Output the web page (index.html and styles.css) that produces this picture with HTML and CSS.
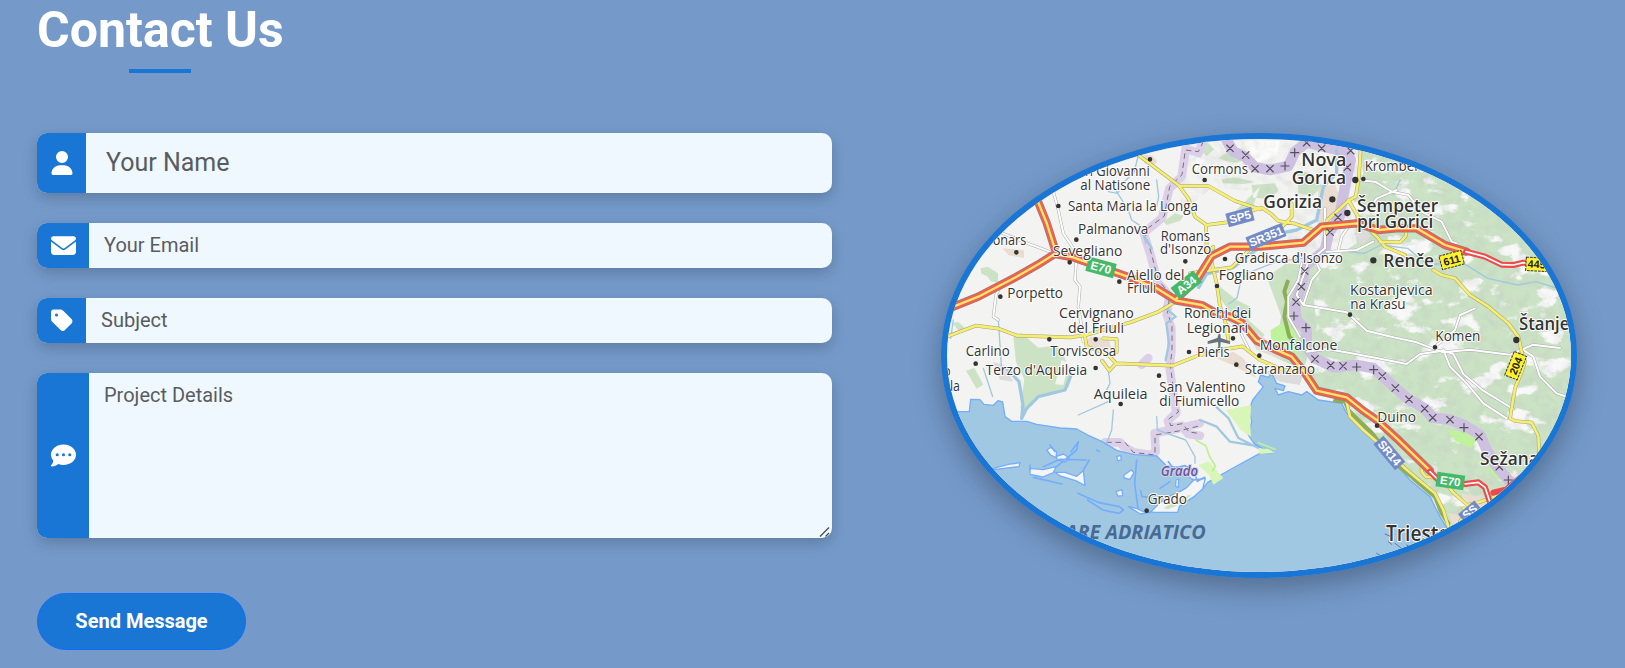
FILE: index.html
```html
<!DOCTYPE html>
<html lang="en">
<head>
<meta charset="utf-8">
<title>Contact Us</title>
<link rel="stylesheet" href="styles.css">
</head>
<body>
<section class="contact">
  <h2 class="title">Contact Us</h2>
  <div class="columns">
    <form class="form">
      <div class="field field-name">
        <span class="icon"><svg width="22" height="24" viewBox="0 0 448 512"><path d="M224 256a128 128 0 1 0 0-256 128 128 0 1 0 0 256zm-45.700 48C79.800 304 0 383.800 0 482.300 0 498.700 13.300 512 29.700 512h388.600c16.400 0 29.700-13.300 29.700-29.700C448 383.800 368.200 304 269.700 304h-91.400z"/></svg></span>
        <input class="input" type="text" placeholder="Your Name">
      </div>
      <div class="field">
        <span class="icon"><svg width="25" height="25" viewBox="0 0 512 512"><path d="M48 64C21.500 64 0 85.500 0 112c0 15.100 7.100 29.300 19.200 38.400l217.600 163.200c11.400 8.500 27 8.500 38.400 0l217.600-163.200c12.100-9.100 19.200-23.300 19.200-38.400 0-26.500-21.500-48-48-48H48zM0 176v208c0 35.300 28.700 64 64 64h384c35.300 0 64-28.700 64-64V176L294.400 339.200a64 64 0 0 1-76.800 0L0 176z"/></svg></span>
        <input class="input" type="email" placeholder="Your Email">
      </div>
      <div class="field">
        <span class="icon"><svg width="22" height="25" viewBox="0 0 448 512"><path d="M0 80v149.500c0 17 6.700 33.300 18.700 45.300l176 176c25 25 65.500 25 90.500 0l133.500-133.500c25-25 25-65.500 0-90.500l-176-176c-12-12-28.300-18.700-45.300-18.700H48C21.500 32 0 53.500 0 80zm112 32a32 32 0 1 1 0 64 32 32 0 1 1 0-64z"/></svg></span>
        <input class="input" type="text" placeholder="Subject">
      </div>
      <div class="field field-message">
        <span class="icon"><svg width="25" height="25" viewBox="0 0 512 512"><path d="M256 448c141.400 0 256-93.100 256-208S397.400 32 256 32 0 125.100 0 240c0 45.100 17.700 86.800 47.700 120.900-1.900 24.500-11.400 46.300-21.400 62.900-5.500 9.200-11.100 16.600-15.200 21.600-2.100 2.500-3.700 4.400-4.900 5.700-.6.600-1 1.100-1.300 1.400l-.3.300c-4.600 4.600-5.900 11.400-3.400 17.400s8.300 9.900 14.800 9.900c28.700 0 57.600-8.900 81.600-19.300 22.900-10 42.400-21.900 54.300-30.600 31.800 11.500 67 17.900 104.100 17.900zM128 208a32 32 0 1 1 0 64 32 32 0 1 1 0-64zm128 0a32 32 0 1 1 0 64 32 32 0 1 1 0-64zm96 32a32 32 0 1 1 64 0 32 32 0 1 1-64 0z"/></svg></span>
        <textarea class="input" placeholder="Project Details"></textarea>
        <svg class="grip" width="12" height="12" viewBox="0 0 12 12"><path d="M1 10.500 10 1.500M6.500 10.500 10 7"/></svg>
      </div>
      <button class="send" type="button">Send Message</button>
    </form>
    <div class="map">
      <svg class="map-art" viewBox="51 57 1872 1299" preserveAspectRatio="none">
        <defs>
          <filter id="patches" x="0" y="0" width="100%" height="100%">
            <feTurbulence type="fractalNoise" baseFrequency=".011 .017" numOctaves="5" seed="8"/>
            <feColorMatrix values="0 0 0 0 .94  0 0 0 0 .94  0 0 0 0 .94  10 0 0 0 -5.700"/>
            <feComposite in2="SourceGraphic" operator="in" result="p"/>
            <feMerge><feMergeNode in="SourceGraphic"/><feMergeNode in="p"/></feMerge>
          </filter>
          <filter id="relief" x="0" y="0" width="100%" height="100%">
            <feTurbulence type="fractalNoise" baseFrequency=".03" numOctaves="4" seed="3"/>
            <feColorMatrix values="0 0 0 0 .5  0 0 0 0 .52  0 0 0 0 .5  1.600 0 0 0 -.68"/>
            <feComposite in2="SourceGraphic" operator="in"/>
          </filter>
          <path id="x" d="M-10-10 10 10M-10 10 10-10"/>
          <path id="plus" d="M-12 0H12M0-12V12"/>
        </defs>
        <rect x="51" y="57" width="1872" height="1299" fill="#f3f3f2"/>

        <!-- woodland -->
        <g class="wood" filter="url(#patches)">
          <path d="M1290 57H1923V1356H1600L1545 1240 1500 1130 1350 965 1250 850 1150 800 1110 690 1050 640 1060 470 1170 440 1280 370 1270 230 1300 160Z"/>
        </g>
        <g class="wood">
          <path d="M800 80l28-18 24 25-22 22zM865 115l30-20 38-5 20 25-34 14-30-6zM875 178l40-6 60 14-35 6-62-2zM700 305l35-25 26 7-10 15-40 13zM965 195l70-5 10 22-30 25-45-4zM152 445l22-5 30 20v28l-22-4-10-15-18-8zM1100 150l38 8 40 40-30 30-43-8zM1010 470l60-40 100 10-20 80 10 100-40 130-90-40 24-120zM870 500l50 40 40 20-5 40 50 45-30 18-60-70-47-60zM250 650l25-10 50 43 60-8 43 88-12 38-90 30-35 40-20-6 12-88-25-50zM108 752l25-8 27 50-20 12zM68 610l15-5 20 17-15 13zM990 200l-80 80 50 5z"/>
        </g>
        <path fill="#fff" opacity=".7" d="M395 720l22 10-17 65-25-2zM800 110l25 10-30 30zM940 65l110-5-10 50-70 20z"/>
        <path filter="url(#relief)" opacity=".38" d="M760 57H1923V1356H1600L1545 1240 1500 1130 1350 965 1250 850 1150 800 1110 690 1050 640 1060 420 1100 230 850 200 750 280Z"/>
        <path fill="#bff29b" d="M1022 630l30-18 35 12 22 45-15 50-35-20-36-44zM1550 930l70 12 20 20-18 22-45-20zM1670 1038l45 23 8 22-30-12z"/>
        <path fill="#e9dcd0" d="M640 103l28 4 14 18-14 15-26-12zM218 385l64 5v24l-46-8zM480 650l55 5 14 45-48-7-35-22zM1165 205l50-12 15 40-20 52-48 28zM860 715l50-20 30 20 40 60-68-38zM940 620l60 30 60 70-80-30zM1590 1120l60 10 30 20-50 18zM1555 1180l40 5 15 35-30 20z"/>
        <path fill="#dcdcdc" d="M1270 340l38-10 12 20-24 24zM190 725l30 10 30 50-40-6zM1000 755l60-10 60 10-10 40-60-10z"/>

        <!-- frontier bands -->
        <g class="band">
          <path d="M818 65l-12 34-39-13-12 84-37 36-22 88-55 45 20 64 22 84 35 40-8 56 14 40v70l-5 50 10 75 10 60-25 25 6 20 35-6 20 25 35 5"/>
          <path d="M525 967h45l10 12 30 18 52 8 15-10-3-55 75-15 60-15" />
          <path d="M655 714l-20 20"/>
        </g>
        <path class="band band-wide" d="M890 60L910 95 945 110 975 142 1020 150 1075 138 1095 95 1130 68 1190 82 1250 95 1262 120 1245 200 1228 290 1196 340 1185 390 1125 440 1114 500 1095 560 1100 600 1130 630 1130 680 1155 715 1210 742 1280 735 1331 745 1396 804 1437 838 1484 866 1508 893 1560 899 1602 915 1650 945 1668 985 1700 1040 1740 1085 1760 1120"/>
        <path class="dash" d="M820 65l-15 30-39-5-10 74-37 36-16 88-60 45 20 64 22 84 35 40-8 56 14 40v70l-5 50 10 75 14 64-29 21 6 20 35-6 20 25 35 5M530 967l55 0 25 30 65 8 0-60 70-12 62-15"/>

        <!-- rivers -->
        <g class="river">
          <path d="M625 105l-12 50-30 30-20 35-28-5M550 200l45 70 10 30 30 20 12 50"/>
          <path d="M1923 490l-25 20-80-25-55 10-90-20-80-50-100 10-60-50-80-10-50 25-80-8-80 20-100 12-90 35-22 30-10 45-25 18"/>
          <path class="river-wide" d="M1220 90v70l-40 40-20 100-60 30-60 12-130 100-80 20-24 40M275 895l15-30 35-35 80-20 18-45M275 895l4-40-12-70-37-40"/>
          <path class="river-mid" d="M640 345l25 40M702 560l35 30-28 20 8 60-10 50M860 862l35 32 30 60 60 30M810 900l50 20 40 45 90 15"/>
          <path d="M535 750l5 40-15 30M550 870l-5 60-15 40M445 885l90-40M680 890l2 40 85 30 28 50v20M160 745l28 85M70 600l-8 55M205 600l10 150M680 180l6 50-6 30M1410 180l-20 45"/>
        </g>

        <!-- sea and lagoon -->
        <path class="sea" d="M40 875h78l4-37 28 1 12 14 28 3 14-14 14 4 7 44 20 14h45l30 9 70 11 50 3 35 19 40 18 45 27 52 13 68 4 30 30 45 6 28 32 18 5 5 18 10 10 17-22L920 1038 990 1000 1030 998 990 982 972 970 955 945 965 905 958 870 968 840 1000 800 985 785 992 765 1015 772 1025 760 1040 790 1065 798 1060 812 1035 805 1045 825 1075 815 1115 825 1130 815 1165 840 1235 850 1250 880 1310 930 1345 965 1400 1035 1440 1080 1500 1130 1530 1190 1560 1240V1400H40Z"/>
        <g class="island">
          <path d="M190 1045l45-12 35-5-3 12-70 8zM300 1045l40 4 38-9-8 18-32 13-38-8zM350 990l12-8 18 13-2 18-16-8zM378 1010l22-8 18 12-12 12-22-6zM375 1057l30 0 35 12 20-17 5 45-28-15-47-14zM582 1065l22-15 8 8-12 20-18-4zM558 1115l18-6 2 18-14 1zM560 1010l12-4 2 13-10 4zM595 1160l25 5 20 10 35 2 68 0 5-18 45-30 25-22 8-32-35 5-20 22-20 12-20 8-40 25-30 30-30 5zM738 1080l8-3-1 26-8-4z"/>
        </g>
        <path class="lagoon" d="M620 1020l-6 70 10 75M443 1120l65 28 60 12 12 10-12 10-50-10-45-30M380 1040l60-50 5-25-22 30M340 1040l50-22 80 2M360 975l15 20M460 1050l18-30M632 1112l4 18 28 2M690 1105l30-20M715 1025l15 20 35-8 25 12 12 35 22-12M300 1035v15M310 1072l86 20M500 990l8 5"/>
        <path fill="#d7f6b8" d="M888 870l75-15-2 60 2 35-30-20zM805 1036l30-12 45 50-30 20-12-28zM985 985l30 2 20 11-45 4z"/>
        <path fill="#cfe3c4" d="M700 1165l45-30 40-12-25 25-45 20z"/>
        <path fill="none" stroke="#bdf09a" stroke-width="5" d="M798 960l30 18 10 30 18 30-8 15M985 968l50 20"/>

        <path class="coastwood" d="M1073 485l-10 30 8 30-8 45 15 60 30 30M1215 842l30 3 10 25 30 30 40 38 80 100 40 32M1440 1065l15 15 60 50 20 50 20 30"/>

        <!-- minor roads -->
        <defs><path id="minor" d="M370 215l15 55 15 70 20 30 20 30-5 80 15 20-5 60 10 60 5 45M218 340l75 30 80 30M205 600l-15-10 8-65 15-30M1280 180l55 5 50 30 50 10 40 50 60 30 30 60 15 5M1185 265v120l-50 40-35 100 20 30 130 22 60 55 80 20 70 15 80 30 80-8 120 15 70-30 80 10M1515 680l60-50 15-45 45-20M1190 395l90-5 50-25M1225 390l10-40 20-30M1150 410l20 40-25 30-25 75M1115 430l-10 50-30 50v60l35 60M1400 210l-60 25-20 30M1130 695l60-8 70 12 80 15 90 18 40-30 70-10 30 10 30 60 60 50 90 55M1540 690l20 50 50 50 50 60 70 45M1780 690l30 20 20 60 50 50 60 20M880 595l50 40 30 60"/></defs>
        <use href="#minor" class="minor-case"/><use href="#minor" class="minor"/>

        <!-- yellow roads -->
        <defs><path id="yellow" d="M45 652l92-35 65 8 60 22 160 5 50-8 25-7 105-30 80-30 60-35M465 650l5 30 60 20 28 30 170 7 70-28 80-20 60-10 50 40 70 30 90 10M530 700l28 30-20 22-22-30M520 655l40 2v40M625 105l40 30 80 60 30 40 20 55 35 25 60-8 60-30 45-14 30 20 20 20 50 8 70 24M750 198h85l80 45 75 25M828 315l2 70 12 30 18 75 10 70 15 40 10 60M820 385h30v-5M780 460l55-8 70-10 50-50M1292 85l-5 85-10 60-22 12-65 60M1190 300v40M1255 240l35 60 55 55 20 25 60 25M1350 365l60 2 18-20v-20M1510 450l25 15 40 10 45 50 55 35 60 50 30 40 10 45 10 30-10 30-20 50-15 90 15 8 50 5 20 40 5 90M1085 250v40l-28 30M1250 845l10 45 40 40 80 70 45 45 30 25 60 50 25 50 15 50M1475 1040v15l12 15 50 5 30 40 45 40 40-10 110-40M1600 1165l60 10M1620 1155l-30 50"/></defs>
        <use href="#yellow" class="yellow-case"/><use href="#yellow" class="yellow"/>

        <!-- motorways -->
        <defs><path id="motor" d="M320 235L350 309 374 385M45 570L145 530 260 470 330 430 374 402 429 412 599 472 680 505 740 542 815 555 860 580 900 590 935 608 980 662 1035 688 1085 710 1122 755 1160 812 1250 832 1300 872 1340 900 1400 955 1500 1052M735 540L800 480 845 408 900 380 990 380 1120 368 1175 320 1280 310 1345 330 1400 325 1460 325 1545 375 1610 395"/></defs>
        <use href="#motor" class="motor-grey"/><use href="#motor" class="motor-case"/><use href="#motor" class="motor"/>
        <path class="red-case" d="M1608 395L1665 410 1715 434 1750 435 1780 428 1810 430M1500 1055l25 25M1605 1092l40-5 20 15 15 45M1690 1118l40-10 40-35"/>
        <path class="red" d="M1608 395L1665 410 1715 434 1750 435 1780 428 1810 430M1500 1055l25 25M1605 1092l40-5 20 15 15 45"/>

        <g class="cross">
          <use href="#x" x="900" y="85"/><use href="#x" x="947" y="105"/><use href="#x" x="975" y="146"/><use href="#x" x="1020" y="146"/><use href="#plus" x="1065" y="138"/><use href="#plus" x="1094" y="98"/><use href="#x" x="1130" y="68"/><use href="#x" x="1175" y="85"/><use href="#x" x="1262" y="92"/><use href="#x" x="1252" y="142"/><use href="#x" x="1224" y="292"/><use href="#x" x="1200" y="336"/><use href="#x" x="1124" y="453"/><use href="#x" x="1114" y="500"/><use href="#x" x="1098" y="546"/><use href="#plus" x="1092" y="588"/><use href="#plus" x="1128" y="623"/><use href="#x" x="1155" y="717"/><use href="#x" x="1202" y="736"/><use href="#x" x="1239" y="738"/><use href="#plus" x="1280" y="741"/><use href="#plus" x="1331" y="749"/><use href="#x" x="1357" y="768"/><use href="#x" x="1396" y="804"/><use href="#x" x="1437" y="838"/><use href="#x" x="1484" y="866"/><use href="#x" x="1508" y="893"/><use href="#x" x="1560" y="899"/><use href="#plus" x="1602" y="923"/><use href="#x" x="1647" y="950"/><use href="#x" x="1708" y="1040"/><use href="#plus" x="1735" y="1080"/>
        </g>
        <path class="dots" d="M660 118h0M824 180h0M385 258h0M439 359h0M259 397h0M419 427h0M568 485h0M766 424h0M885 417h0M211 530h0M861 498h0M358 658h0M497 658h0M909 655h0M777 696h0M988 707h0M919 734h0M137 731h0M497 744h0M687 767h0M572 852h0M650 1172h0M1300 177h0M1260 584h0M1515 682h0M1341 917h0"/>
        <path class="dots dots-big" d="M1276 180h0M1207 238h0M1252 279h0M1330 421h0M1759 660h0"/>
        <path fill="#66747c" d="M866 642c4-4 6 0 6 12l28 10v8l-28-6-1 14 8 7-11-2-10 2 7-7-1-14-31 6v-8l29-10z"/>

        <!-- road shields -->
        <g class="shield">
          <g transform="translate(513 442) rotate(15)"><rect class="green" x="-43" y="-22" width="86" height="44"/><text y="13">E70</text></g>
          <g transform="translate(769 495) rotate(-38)"><rect class="green" x="-43" y="-22" width="86" height="44"/><text y="13">A34</text></g>
          <g transform="translate(1561 1083) rotate(8)"><rect class="green" x="-42" y="-22" width="84" height="44"/><text y="13">E70</text></g>
          <g transform="translate(930 291) rotate(-15)"><rect class="blue" x="-40" y="-21" width="80" height="42"/><text y="12">SP5</text></g>
          <g transform="translate(1008 350) rotate(-22)"><rect class="blue" x="-58" y="-21" width="116" height="42"/><text y="12">SR351</text></g>
          <g transform="translate(1378 999) rotate(50)"><rect class="blue" x="-51" y="-20" width="102" height="40"/><text y="12">SR14</text></g>
          <g transform="translate(1620 1176) rotate(-40)"><rect class="blue" x="-32" y="-18" width="64" height="36"/><text y="12">SS</text></g>
          <g class="route" transform="translate(1565 420) rotate(-15)"><rect x="-34" y="-21" width="68" height="42"/><text y="12">611</text></g>
          <g class="route" transform="translate(1820 432) rotate(3)"><rect x="-32" y="-19" width="74" height="40"/><text y="12">445</text></g>
          <g class="route" transform="translate(1757 737) rotate(-68)"><rect x="-38" y="-20" width="76" height="40"/><text y="12">204</text></g>
        </g>

        <!-- place names -->
        <g class="names">
          <text x="465" y="169" textLength="194">n Giovanni</text><text x="451" y="209" textLength="210">al Natisone</text>
          <text x="785" y="162" textLength="169">Cormons</text><text x="414" y="274" textLength="390">Santa Maria la Longa</text>
          <text x="444" y="342" textLength="211">Palmanova</text><text x="692" y="362" textLength="148">Romans</text><text x="690" y="403" textLength="154">d'Isonzo</text>
          <text x="188" y="376" textLength="101">onars</text><text x="369" y="407" textLength="208">Sevegliano</text>
          <text x="591" y="480" textLength="172">Aiello del</text><text x="591" y="519" textLength="88">Friuli</text>
          <text x="914" y="430" textLength="325">Gradisca d'Isonzo</text><text x="866" y="481" textLength="166">Fogliano</text>
          <text x="232" y="534" textLength="167">Porpetto</text><text x="387" y="595" textLength="224">Cervignano</text><text x="414" y="639" textLength="168">del Friuli</text>
          <text x="762" y="595" textLength="202">Ronchi dei</text><text x="770" y="638" textLength="184">Legionari</text>
          <text x="107" y="709" textLength="132">Carlino</text><text x="361" y="707" textLength="198">Torviscosa</text><text x="801" y="711" textLength="98">Pieris</text>
          <text x="989" y="689" textLength="233">Monfalcone</text><text x="944" y="761" textLength="211">Staranzano</text>
          <text x="167" y="764" textLength="304">Terzo d'Aquileia</text><text x="60" y="812" textLength="30">la</text><text x="40" y="769" textLength="22">o</text>
          <text x="491" y="836" textLength="162">Aquileia</text><text x="688" y="815" textLength="258">San Valentino</text><text x="688" y="857" textLength="240">di Fiumicello</text>
          <text x="653" y="1152" textLength="118">Grado</text>
          <text x="1304" y="154" textLength="186">Kromberk</text><text x="1260" y="526" textLength="248">Kostanjevica</text><text x="1261" y="566" textLength="166">na Krasu</text>
          <text x="1516" y="662" textLength="135">Komen</text><text x="1342" y="907" textLength="116">Duino</text>
          <g class="town">
            <text x="1114" y="138" textLength="135">Nova</text><text x="1085" y="193" textLength="163">Gorica</text><text x="1000" y="264" textLength="176">Gorizia</text>
            <text x="1281" y="275" textLength="244">Šempeter</text><text x="1281" y="324" textLength="229">pri Gorici</text><text x="1360" y="440" textLength="152">Renče</text>
            <text x="1767" y="629" textLength="165">Štanjel</text><text x="1650" y="1036" textLength="176">Sežana</text>
          </g>
          <text class="city" x="1368" y="1264" textLength="190">Trieste</text>
          <text class="lagoon-name" x="692" y="1067" textLength="112">Grado</text>
          <text class="sea-name" x="353" y="1256" textLength="474">MARE ADRIATICO</text>
        </g>
        <path stroke="#5a76bb" stroke-width="3" fill="none" d="M1365 1242l18 8M1375 1265l10 8M1395 1270l18 14M1340 1300l10 6M1430 1275l15 8"/>
      </svg>
    </div>
  </div>
</section>
<script src="map.js"></script>
</body>
</html>
```
FILE: map.js
```javascript
// Place names are condensed to their label width instead of being letter-spaced.
document.querySelectorAll('.names text').forEach(function (label) {
  label.setAttribute('lengthAdjust', 'spacingAndGlyphs');
});
```
FILE: styles.css
```css
* { box-sizing: border-box; }

body {
  margin: 0;
  height: 668px;
  overflow: hidden;
  background: #759aca;
  font-family: Roboto, "Liberation Sans", sans-serif;
}

.contact { padding: 0 48px 0 37px; }

.title {
  width: 246px;
  margin: 0;
  padding-bottom: 16px;
  color: #fff;
  font-size: 50px;
  font-weight: 700;
  line-height: 61px;
  white-space: nowrap;
}

.title::after {
  content: "";
  display: block;
  width: 62px;
  height: 4px;
  margin: 8px auto 0;
  background: #1976d5;
}

.columns {
  display: flex;
  justify-content: space-between;
  align-items: flex-start;
  margin-top: 44px;
}

.form { width: 795px; }

.field {
  position: relative;
  display: flex;
  height: 45px;
  margin-bottom: 30px;
  overflow: hidden;
  border-radius: 10px;
  background: #f0f8ff;
  box-shadow: 0 5px 15px rgba(0, 0, 0, .2);
}

.field-name { height: 60px; }
.field-message { height: 165px; margin-bottom: 55px; }

.icon {
  display: flex;
  flex: none;
  align-items: center;
  width: 52px;
  padding: 0 0 1px 14px;
  background: #1976d5;
}

.icon:has(svg[width="22"]) { width: 49px; }
.icon svg { display: block; fill: #fff; }
.field-name .icon { padding-bottom: 0; }

.input {
  flex: 1;
  min-width: 0;
  margin: 0;
  padding: 0 15px 2px;
  border: 0;
  outline: 0;
  background: transparent;
  font: 400 20px/24px Roboto, sans-serif;
}

.field-name .input { padding: 0 20px 2px; font-size: 25px; }
.field-message .input { padding: 10px 15px; resize: none; }
.input::placeholder { color: #595c5f; opacity: 1; }

.grip {
  position: absolute;
  right: 1px;
  bottom: 0;
  fill: none;
  stroke: #4a4d50;
  stroke-width: 1.300;
}

.send {
  display: block;
  width: 209px;
  height: 57px;
  padding: 0 0 2px;
  border: 1px solid #0d6efd;
  border-radius: 29px;
  background: #1976d5;
  color: #fff;
  font: 700 20px Roboto, sans-serif;
}

.map {
  width: 636px;
  height: 445px;
  overflow: hidden;
  border: 6px solid #1976d5;
  border-radius: 50%;
  box-shadow: 0 10px 30px rgba(0, 0, 0, .3);
}

.map-art { display: block; width: 100%; height: 100%; }

.map-art path, .map-art use { stroke-linejoin: round; stroke-linecap: round; }
.wood { fill: #cbe2c5; }
.band { fill: none; stroke: #dcd0e8; stroke-width: 26; }
.band-wide { stroke: #cdc0e0; stroke-width: 32; }
.dash { fill: none; stroke: #77717c; stroke-width: 3; stroke-dasharray: 14 14; }
.river { fill: none; stroke: #a0c8e0; stroke-width: 4; }
.river-wide { stroke-width: 10; }
.river-mid { stroke-width: 7; }
.sea { fill: #a1c8e2; stroke: #74aefa; stroke-width: 4; }
.island { fill: #f5f5f5; stroke: #74aefa; stroke-width: 4; }
.lagoon { fill: none; stroke: #74aefa; stroke-width: 5; }
.coastwood { fill: none; stroke: #8cae57; stroke-width: 12; }
.minor-case { fill: none; stroke: #aaa; stroke-width: 9; }
.minor { fill: none; stroke: #fff; stroke-width: 6; }
.yellow-case { fill: none; stroke: #a5a17c; stroke-width: 11; }
.yellow { fill: none; stroke: #f5ee6e; stroke-width: 8; }
.motor-grey { fill: none; stroke: #8b8581; stroke-width: 25; }
.motor-case { fill: none; stroke: #f35f4c; stroke-width: 21; }
.motor { fill: none; stroke: #fbe76e; stroke-width: 7; }
.red-case { fill: none; stroke: #ed4a4b; stroke-width: 18; }
.red { fill: none; stroke: #fff; stroke-width: 5; }
.cross { fill: none; stroke: #55505c; stroke-width: 3.500; }
.dots { fill: none; stroke: #333; stroke-width: 14; }
.dots-big { stroke-width: 19; }

.shield text {
  fill: #fff;
  font: 700 35px "Liberation Sans", sans-serif;
  text-anchor: middle;
}
.green { fill: #45b969; }
.blue { fill: #7489c7; }
.route rect { fill: #fff22d; stroke: #333; stroke-width: 3; stroke-dasharray: 8 3; }
.route text { fill: #222; font-size: 32px; }

.names {
  fill: #333;
  stroke: #fff;
  stroke-width: 6px;
  stroke-linejoin: round;
  paint-order: stroke;
  font: 400 44px "Open Sans", "Noto Sans", sans-serif;
}
.town { font-size: 52px; font-weight: 600; }
.city { font-size: 64px; font-weight: 600; }
.lagoon-name { fill: #765092; stroke: #c5d8ed; font-weight: 600; font-style: italic; }
.sea-name { fill: #486b93; stroke: none; font-size: 59px; font-weight: 700; font-style: italic; }
```
